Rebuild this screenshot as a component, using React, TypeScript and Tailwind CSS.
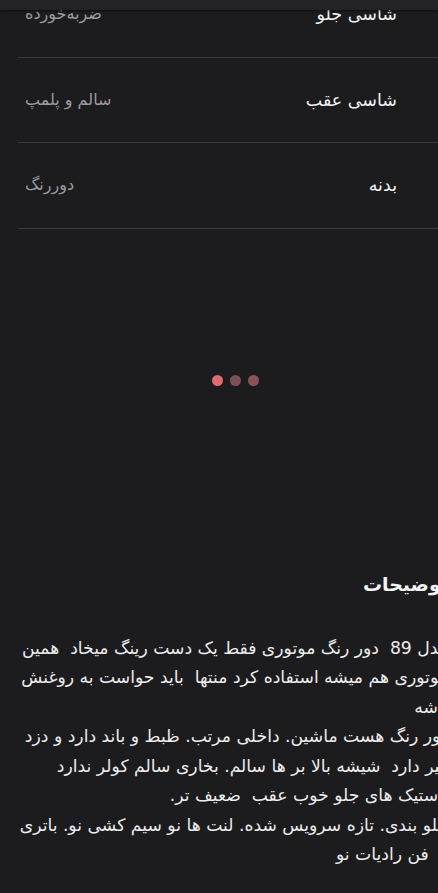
import React from "react";

const rows = [
  { label: "شاسی جلو", value: "ضربه‌خورده" },
  { label: "شاسی عقب", value: "سالم و پلمپ" },
  { label: "بدنه", value: "دوررنگ" },
];

const lines = [
  "مدل 89  دور رنگ موتوری فقط یک دست رینگ میخاد  همین",
  "موتوری هم میشه استفاده کرد منتها  باید حواست به روغنش",
  "باشه",
  "دور رنگ هست ماشین. داخلی مرتب. ظبط و باند دارد و دزد",
  "گیر دارد  شیشه بالا بر ها سالم. بخاری سالم کولر ندارد",
  "لاستیک های جلو خوب عقب  ضعیف تر.",
  "جلو بندی. تازه سرویس شده. لنت ها نو سیم کشی نو. باتری",
  "و  فن رادیات نو",
];

export default function App() {
  return (
    <div
      dir="ltr"
      className="relative min-h-[893px] overflow-hidden bg-[#1c1b1e]"
      style={{ fontFamily: '"DejaVu Sans", sans-serif' }}
    >
      <div dir="rtl" className="w-[470px] mt-[-28px]">
        <div className="ml-[18px]">
          {rows.map((row) => (
            <div
              key={row.label}
              className="flex h-[85.5px] items-center justify-between border-b border-[#3a393d] pr-[73px] pl-[7px]"
            >
              <span className="text-[17.5px] text-[#f2f2f2]">{row.label}</span>
              <span className="text-[16px] text-[#9c9c9e]">{row.value}</span>
            </div>
          ))}
        </div>

        <div dir="ltr" className="flex h-[304px] items-center justify-center gap-[7px]">
          <span className="h-[11px] w-[11px] rounded-full bg-[#df6b70]" />
          <span className="h-[11px] w-[11px] rounded-full bg-[#7b5157]" />
          <span className="h-[11px] w-[11px] rounded-full bg-[#875359]" />
        </div>

        <div className="pr-[22px] pl-4">
          <h2 className="mt-[33px] text-[19px] font-bold leading-[36px] text-[#f4f4f4]">توضیحات</h2>
          <div className="mt-[32px] text-[17.2px] leading-[29.5px] text-[#ececec]">
            {lines.map((line, i) => (
              <div key={i} className="whitespace-pre">
                {line}
              </div>
            ))}
          </div>
        </div>
      </div>

      <div className="absolute inset-x-0 top-0 h-[10px] bg-[#232226] shadow-[0_1px_3px_rgba(0,0,0,0.5)]" />
    </div>
  );
}
